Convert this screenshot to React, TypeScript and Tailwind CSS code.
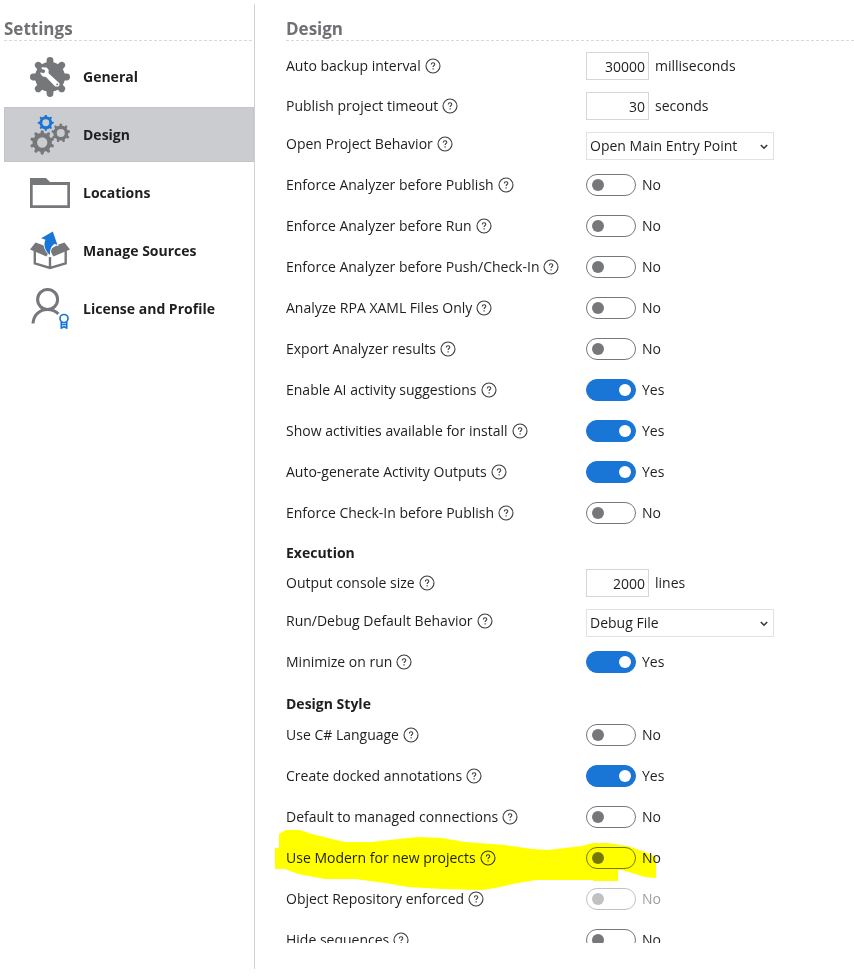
import { useState } from "react";
import type { ReactNode } from "react";

type Setting =
  | { kind: "number"; label: string; value: string; unit: string }
  | { kind: "select"; label: string; options: string[] }
  | { kind: "toggle"; label: string; on?: boolean; disabled?: boolean; marked?: boolean };

type Section = { title?: string; settings: Setting[] };

const sections: Section[] = [
  {
    settings: [
      { kind: "number", label: "Auto backup interval", value: "30000", unit: "milliseconds" },
      { kind: "number", label: "Publish project timeout", value: "30", unit: "seconds" },
      { kind: "select", label: "Open Project Behavior", options: ["Open Main Entry Point", "Do Not Open Anything"] },
      { kind: "toggle", label: "Enforce Analyzer before Publish" },
      { kind: "toggle", label: "Enforce Analyzer before Run" },
      { kind: "toggle", label: "Enforce Analyzer before Push/Check-In" },
      { kind: "toggle", label: "Analyze RPA XAML Files Only" },
      { kind: "toggle", label: "Export Analyzer results" },
      { kind: "toggle", label: "Enable AI activity suggestions", on: true },
      { kind: "toggle", label: "Show activities available for install", on: true },
      { kind: "toggle", label: "Auto-generate Activity Outputs", on: true },
      { kind: "toggle", label: "Enforce Check-In before Publish" },
    ],
  },
  {
    title: "Execution",
    settings: [
      { kind: "number", label: "Output console size", value: "2000", unit: "lines" },
      { kind: "select", label: "Run/Debug Default Behavior", options: ["Debug File", "Run File"] },
      { kind: "toggle", label: "Minimize on run", on: true },
    ],
  },
  {
    title: "Design Style",
    settings: [
      { kind: "toggle", label: "Use C# Language" },
      { kind: "toggle", label: "Create docked annotations", on: true },
      { kind: "toggle", label: "Default to managed connections" },
      { kind: "toggle", label: "Use Modern for new projects", marked: true },
      { kind: "toggle", label: "Object Repository enforced", disabled: true },
      { kind: "toggle", label: "Hide sequences" },
    ],
  },
];

function Gear({ cx, cy, r, teeth, color }: { cx: number; cy: number; r: number; teeth: number; color: string }) {
  return (
    <g transform={`translate(${cx} ${cy})`} stroke={color} fill="none">
      <circle r={r * 0.62} strokeWidth={r * 0.38} />
      {Array.from({ length: teeth }, (_, i) => (
        <path
          key={i}
          d={`M0 ${-r * 0.7}V${-r * 0.88}`}
          strokeWidth={r * 0.28}
          strokeLinecap="round"
          transform={`rotate(${(i * 360) / teeth})`}
        />
      ))}
    </g>
  );
}

function GeneralIcon() {
  return (
    <svg width="40" height="40" viewBox="0 0 40 40" aria-hidden="true">
      <g transform="translate(20 20)" stroke="#76777b" strokeLinecap="round">
        <circle r="15" fill="#76777b" stroke="none" />
        {[0, 45, 90, 135, 180, 225, 270, 315].map((a) => (
          <path key={a} d="M0 -10V-16.6" strokeWidth="6.8" transform={`rotate(${a})`} />
        ))}
      </g>
      <path
        fill="#fff"
        d="M11.7 10.3l5 .3 2 2.4-.2 3.3 10.7 9.600c1 1.600.3 3.300-2 3.800-1 0-2-.2-2.800-.9L16 19.900l-3.300-.5-2.400-3 .4-1.200 2.600 1.100 1.800-1.300-.3-2-3.100-1z"
      />
      <circle cx="27.2" cy="27.4" r="0.9" fill="#76777b" />
    </svg>
  );
}

function DesignIcon() {
  return (
    <svg width="40" height="40" viewBox="0 0 40 40" aria-hidden="true">
      <Gear cx={15.8} cy={7.8} r={8} teeth={8} color="#1976d7" />
      <Gear cx={30.8} cy={18} r={9.3} teeth={9} color="#76777b" />
      <Gear cx={12.2} cy={27.5} r={12} teeth={10} color="#76777b" />
    </svg>
  );
}

function LocationsIcon() {
  return (
    <svg width="40" height="30" viewBox="0 0 40 30" aria-hidden="true">
      <path fill="#76777b" fillRule="evenodd" d="M0 0h16l4 4h20v26H0zM2.7 7v20.3h34.6V7z" />
    </svg>
  );
}

function SourcesIcon() {
  return (
    <svg width="40" height="40" viewBox="0 0 40 40" aria-hidden="true">
      <path fill="none" stroke="#76777b" strokeWidth="2.4" d="M4.8 20v12.3L20 37l15.7-4.7V20M20 26v11" />
      <path fill="none" stroke="#76777b" strokeWidth="1.6" d="M6 13l13.500 5.500M34.500 13l-14 5.500" />
      <path fill="#76777b" d="M5.500 11.500l7 2.500 7.500 5-3.500 6.500L0 18.500zM34.500 11.500L27 14l-7 5 3.300 6.500L40 18.500z" />
      <path
        fill="#1976d7"
        stroke="#fff"
        strokeWidth="1.600"
        paintOrder="stroke"
        d="M22.8.5l4.600 13.300-3.200-.7c-3 2.500-4.400 5.500-4.200 10.900-5-3.600-6.900-10.500-4.500-15.200L11.200 7.300z"
      />
    </svg>
  );
}

function LicenseIcon() {
  return (
    <svg width="40" height="41" viewBox="0 0 40 41" fill="none" aria-hidden="true">
      <g stroke="#76777b" strokeWidth="3">
        <circle cx="17.6" cy="11.5" r="10" />
        <path d="M3 35.5C3.5 27 9.5 21.5 17.6 21.5c4.2 0 7.800 1.400 10.800 4.300" />
      </g>
      <g stroke="#1976d7" strokeWidth="1.700">
        <circle cx="34" cy="30.5" r="4" />
        <path d="M31.3 34v6l2.700-1.200 2.700 1.200V34M31 36.500h6" />
      </g>
    </svg>
  );
}

function HelpIcon() {
  return (
    <svg className="shrink-0" width="16" height="16" viewBox="0 0 16 16" fill="none" stroke="#3c3c3c" aria-hidden="true">
      <circle cx="8" cy="8" r="7" strokeWidth="1.1" />
      <path d="M6.3 6.4c0-1.100.7-1.700 1.800-1.700 1 0 1.700.6 1.700 1.500 0 1.300-1.700 1.400-1.700 2.900" strokeWidth="1.1" />
      <path d="M8.1 10.2v1.300" strokeWidth="1.2" />
    </svg>
  );
}

// Yellow marker stroke that runs over a single setting
function Marker() {
  return (
    <svg
      className="pointer-events-none absolute -top-2 -left-3 mix-blend-multiply"
      width="382"
      height="62"
      viewBox="-1 0 382 62"
      aria-hidden="true"
    >
      <path
        fill="#ff0"
        d="M4 5l7-4h14l12 4 16 4 17 4h27l26-3 20-2 24 1 23 4 40 3 27 4 16 1 17-2 17-2 11-3h15l20 3 17 6 11 5v21l-11-1-13-4-11-3h-3v11h-25v-1h-56l-19 3-23 5-13 2-40-1-34-2-23-4-30-4H50l-27-5-13-5H0V19h4z"
      />
    </svg>
  );
}

const navItems: { name: string; icon: ReactNode }[] = [
  { name: "General", icon: <GeneralIcon /> },
  { name: "Design", icon: <DesignIcon /> },
  { name: "Locations", icon: <LocationsIcon /> },
  { name: "Manage Sources", icon: <SourcesIcon /> },
  { name: "License and Profile", icon: <LicenseIcon /> },
];

function Title({ children }: { children: ReactNode }) {
  return (
    <header>
      <h1 className="pt-3.5 text-[17px] leading-[22px] font-bold text-[#707175]">{children}</h1>
      <div className="h-px bg-[repeating-linear-gradient(90deg,#d8d8db_0_3px,transparent_3px_5px)]" />
    </header>
  );
}

function SettingRow({ setting }: { setting: Setting }) {
  const [on, setOn] = useState(setting.kind === "toggle" && !!setting.on);
  const id = setting.label.toLowerCase().replace(/[^a-z]+/g, "-");

  if (setting.kind === "number") {
    return (
      <div className="grid h-10 grid-cols-[300px_1fr] items-center">
        <label htmlFor={id} className="flex items-center gap-1">
          {setting.label}
          <HelpIcon />
        </label>
        <div className="flex items-center gap-1.5">
          <input
            id={id}
            type="text"
            inputMode="numeric"
            defaultValue={setting.value}
            className="h-7 w-[63px] border border-[#d5d6da] px-[3px] text-right outline-none"
          />
          <span>{setting.unit}</span>
        </div>
      </div>
    );
  }

  if (setting.kind === "select") {
    return (
      <div className="grid h-[38px] grid-cols-[300px_1fr] items-center pt-0.5">
        <label htmlFor={id} className="flex items-center gap-1 pb-1">
          {setting.label}
          <HelpIcon />
        </label>
        <div className="relative w-[188px]">
          <select id={id} className="h-7 w-full appearance-none border border-[#e1e2e4] bg-white px-[3px] outline-none">
            {setting.options.map((option) => (
              <option key={option}>{option}</option>
            ))}
          </select>
          <svg
            className="pointer-events-none absolute top-3 right-1.5"
            width="8"
            height="6"
            viewBox="0 0 8 6"
            fill="none"
            stroke="#3c3c3c"
            strokeWidth="1.6"
            aria-hidden="true"
          >
            <path d="M.8 1L4 4.2 7.2 1" />
          </svg>
        </div>
      </div>
    );
  }

  return (
    <div className="relative grid h-[41px] grid-cols-[300px_1fr] items-center">
      <label htmlFor={id} className="flex items-center gap-1">
        {setting.label}
        <HelpIcon />
      </label>
      <div className={setting.disabled ? "flex items-center gap-1.5 opacity-45" : "flex items-center gap-1.5"}>
        <input
          id={id}
          type="checkbox"
          role="switch"
          checked={on}
          disabled={setting.disabled}
          onChange={(e) => setOn(e.target.checked)}
          className="flex h-[22px] w-[50px] appearance-none items-center rounded-full border border-[#76777b] bg-white px-[5px] before:size-3 before:rounded-full before:bg-[#76777b] checked:justify-end checked:border-[#1976d7] checked:bg-[#1976d7] checked:px-1 checked:before:bg-white"
        />
        <span>{on ? "Yes" : "No"}</span>
      </div>
      {setting.marked && <Marker />}
    </div>
  );
}

export default function App() {
  const [active, setActive] = useState("Design");

  return (
    <div className="flex h-screen bg-white pt-1 pb-2 pl-1 font-['Open_Sans',sans-serif] text-sm text-[#1e1e1e]">
      <aside className="w-[251px] shrink-0 border-r border-[#d0d1d5]">
        <Title>Settings</Title>
        <nav className="flex flex-col gap-[3px] pt-2">
          {navItems.map((item) => (
            <button
              key={item.name}
              type="button"
              onClick={() => setActive(item.name)}
              className={
                item.name === active
                  ? "flex h-[55px] items-center border border-[#c4c5c9] bg-[#cbccd0] pl-[25px] text-left font-bold"
                  : "flex h-[55px] items-center border border-transparent pl-[25px] text-left font-bold"
              }
            >
              <span className="mr-[13px] flex w-10 justify-center">{item.icon}</span>
              {item.name}
            </button>
          ))}
        </nav>
      </aside>

      <main className="flex min-w-0 flex-1 flex-col pb-[26px] pl-[31px]">
        <Title>Design</Title>
        <div className="-ml-3 min-h-0 flex-1 overflow-hidden pt-[5px] pl-3">
          {sections.map((section, i) => (
            <section key={i} className="last:pt-0.5">
              {section.title && <h2 className="h-[30px] pt-2.5 leading-5 font-bold">{section.title}</h2>}
              {section.settings.map((setting) => (
                <SettingRow key={setting.label} setting={setting} />
              ))}
            </section>
          ))}
        </div>
      </main>
    </div>
  );
}
